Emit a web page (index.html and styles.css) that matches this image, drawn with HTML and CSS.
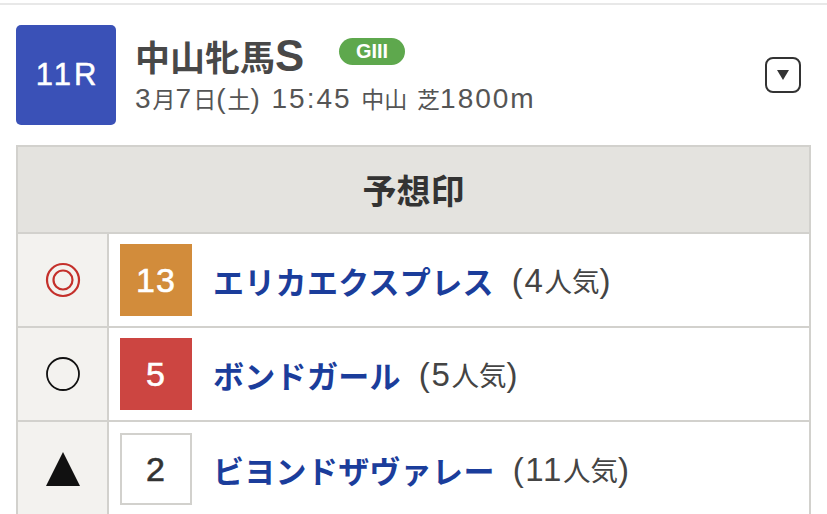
FILE: index.html
```html
<!DOCTYPE html>
<html lang="ja">
<head>
<meta charset="utf-8">
<link rel="stylesheet" href="styles.css">
</head>
<body>
<div class="topline"></div>
<div class="race-head">
  <div class="race-num">11R</div>
  <div class="race-info">
    <div class="race-title"><span>中山牝馬<span class="lt">S</span></span><span class="grade">GIII</span></div>
    <div class="race-sub"><span class="lt">3</span>月<span class="lt">7</span>日<span class="lt">(</span>土<span class="lt">) 15:45 </span>中山<span class="lt"> </span>芝<span class="lt">1800m</span></div>
  </div>
  <div class="toggle"><svg width="14" height="12" viewBox="0 0 14 12"><polygon points="1,1 13,1 7,11" fill="#333"/></svg></div>
</div>
<div class="table">
  <div class="thead">予想印</div>
  <div class="row">
    <div class="mark"><svg width="36" height="36" viewBox="0 0 36 36"><circle cx="18" cy="18" r="16" fill="none" stroke="#c4302b" stroke-width="2.2"/><circle cx="18" cy="18" r="9.5" fill="none" stroke="#c4302b" stroke-width="2.2"/></svg></div>
    <div class="cell"><div class="num orange">13</div><span class="name">エリカエクスプレス</span><span class="pop"><span class="lt">(4</span>人気<span class="lt">)</span></span></div>
  </div>
  <div class="row">
    <div class="mark"><svg width="36" height="36" viewBox="0 0 36 36"><circle cx="18" cy="18" r="16" fill="none" stroke="#111" stroke-width="1.8"/></svg></div>
    <div class="cell"><div class="num red">5</div><span class="name">ボンドガール</span><span class="pop"><span class="lt">(5</span>人気<span class="lt">)</span></span></div>
  </div>
  <div class="row">
    <div class="mark"><svg width="36" height="36" viewBox="0 0 36 36"><polygon points="18,1 35,35 1,35" fill="#111"/></svg></div>
    <div class="cell"><div class="num white">2</div><span class="name">ビヨンドザヴァレー</span><span class="pop"><span class="lt">(11</span>人気<span class="lt">)</span></span></div>
  </div>
</div>
</body>
</html>
```
FILE: styles.css
```css
html, body {
  margin: 0;
  padding: 0;
  background: #fff;
  font-family: "Noto Sans CJK JP", "Noto Sans", sans-serif;
  color: #444;
  overflow: hidden;
}
.lt {
  font-family: "Liberation Sans", Arial, sans-serif;
  font-size: 1.22em;
  letter-spacing: 0.07em;
}
.topline {
  margin-top: 3px;
  height: 2px;
  background: #e8e8e8;
}
.race-head {
  display: flex;
  align-items: flex-start;
  padding: 20px 26px 0 16px;
  height: 120px;
  box-sizing: border-box;
}
.race-num {
  width: 100px;
  height: 100px;
  box-sizing: border-box;
  padding-left: 3px;
  border-radius: 5px;
  background: #3a51b7;
  color: #fff;
  font-family: "Liberation Sans", Arial, sans-serif;
  font-size: 31px;
  letter-spacing: 3px;
  -webkit-text-stroke: 0.5px #fff;
  display: flex;
  align-items: center;
  justify-content: center;
  flex: none;
}
.race-info {
  margin-left: 19px;
  flex: 1;
}
.race-title {
  display: flex;
  align-items: center;
  font-size: 35px;
  font-weight: 700;
  line-height: 44px;
  height: 44px;
  margin-top: 9px;
  color: #484848;
}
.race-title .lt {
  font-size: 1.25em;
  letter-spacing: 0.02em;
}
.grade {
  margin-left: 34px;
  margin-bottom: 10px;
  background: #5ea84d;
  color: #fff;
  font-family: "Liberation Sans", Arial, sans-serif;
  font-size: 20px;
  font-weight: 700;
  line-height: 27px;
  height: 27px;
  width: 66px;
  text-align: center;
  border-radius: 14px;
}
.race-sub {
  font-size: 23px;
  line-height: 32px;
  margin-top: 4px;
  color: #555;
  white-space: nowrap;
}
.toggle {
  margin-top: 32px;
  width: 32px;
  height: 32px;
  border: 2px solid #333;
  border-radius: 8px;
  display: flex;
  align-items: center;
  justify-content: center;
  flex: none;
}
.table {
  margin: 20px 16px 0 16px;
  border: 2px solid #d2d1cd;
}
.thead {
  background: #e4e3df;
  height: 85px;
  display: flex;
  align-items: center;
  justify-content: center;
  font-size: 34px;
  font-weight: 700;
  color: #333;
  border-bottom: 2px solid #d2d1cd;
}
.row {
  display: grid;
  grid-template-columns: 91px 1fr;
  height: 94px;
  border-bottom: 2px solid #d2d1cd;
  box-sizing: border-box;
}
.row:last-child { border-bottom: 0; }
.mark {
  background: #f3f2ef;
  border-right: 2px solid #d2d1cd;
  display: flex;
  align-items: center;
  justify-content: center;
}
.cell {
  display: flex;
  align-items: center;
  padding-left: 11px;
  white-space: nowrap;
}
.num {
  width: 72px;
  height: 72px;
  box-sizing: border-box;
  display: flex;
  align-items: center;
  justify-content: center;
  font-family: "Liberation Sans", Arial, sans-serif;
  font-size: 34px;
  letter-spacing: 1px;
  -webkit-text-stroke: 0.6px currentColor;
  color: #fff;
  flex: none;
}
.orange { background: #d28c3b; }
.red { background: #cc4541; }
.white { background: #fff; border: 2px solid #d2d1cd; color: #333; }
.name {
  margin-left: 21px;
  font-size: 31px;
  letter-spacing: 0.3px;
  font-weight: 700;
  color: #1b3d9b;
}
.pop {
  margin-left: 18px;
  font-size: 27.5px;
  color: #444;
}
.pop .lt {
  font-size: 1.2em;
  letter-spacing: 0.05em;
}
```
